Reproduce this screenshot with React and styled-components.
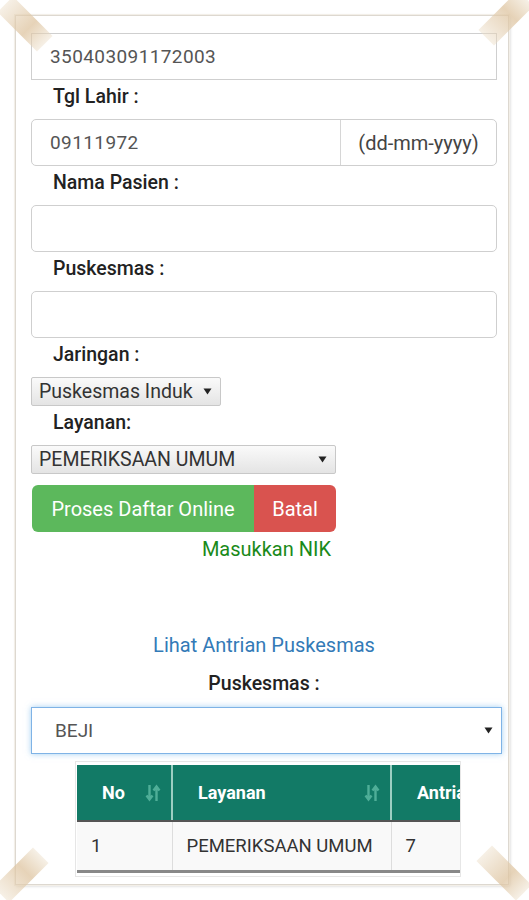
import styled, { createGlobalStyle } from "styled-components";

const GlobalStyle = createGlobalStyle`
  html, body {
    margin: 0;
    padding: 0;
    background: #ffffff;
    font-family: Roboto, "Liberation Sans", sans-serif;
  }
  * { box-sizing: border-box; }
`;

function SortIcon() {
  return (
    <svg width="16" height="20" viewBox="0 0 16 20" fill="none">
      <path d="M4.5 2v14M1.5 12.5l3 4 3-4" stroke="#4fae98" strokeWidth="2.4" />
      <path d="M11.5 18V4M8.5 7.5l3-4 3 4" stroke="#4fae98" strokeWidth="2.4" />
    </svg>
  );
}

function Caret() {
  return (
    <svg width="9" height="7" viewBox="0 0 9 7">
      <path d="M0.5 0.5h8L4.5 6.5z" fill="#222" />
    </svg>
  );
}

export default function App() {
  return (
    <Page>
      <GlobalStyle />
      <Card>
        <TextInput>350403091172003</TextInput>
        <Label>Tgl Lahir :</Label>
        <InputGroup>
          <GroupField>09111972</GroupField>
          <Addon>(dd-mm-yyyy)</Addon>
        </InputGroup>
        <Label>Nama Pasien :</Label>
        <TextInput $rounded />
        <Label>Puskesmas :</Label>
        <TextInput $rounded />
        <Label>Jaringan :</Label>
        <NativeSelect $width={190}>
          <span>Puskesmas Induk</span>
          <Caret />
        </NativeSelect>
        <Label>Layanan:</Label>
        <NativeSelect $width={305}>
          <span>PEMERIKSAAN UMUM</span>
          <Caret />
        </NativeSelect>
        <ButtonRow>
          <Button $color="#5cb85c" $radius="6px 0 0 6px" $width={222}>
            Proses Daftar Online
          </Button>
          <Button $color="#d9534f" $radius="0 6px 6px 0" $width={82}>
            Batal
          </Button>
        </ButtonRow>
        <Notice>Masukkan NIK</Notice>
        <QueueLink>Lihat Antrian Puskesmas</QueueLink>
        <CenterLabel>Puskesmas :</CenterLabel>
        <FocusSelect>
          <span>BEJI</span>
          <Caret />
        </FocusSelect>
        <TableWrap>
          <Table>
            <thead>
              <tr>
                <Th $width={95}>
                  <HeadInner>
                    <span>No</span>
                    <SortIcon />
                  </HeadInner>
                </Th>
                <Th $width={219}>
                  <HeadInner>
                    <span>Layanan</span>
                    <SortIcon />
                  </HeadInner>
                </Th>
                <Th $width={120}>
                  <HeadInner>
                    <span>Antrian</span>
                  </HeadInner>
                </Th>
              </tr>
            </thead>
            <tbody>
              <tr>
                <Td>1</Td>
                <Td>PEMERIKSAAN UMUM</Td>
                <Td>7</Td>
              </tr>
            </tbody>
          </Table>
        </TableWrap>
      </Card>
      <Tape $x={25} $y={24} $rot={45} />
      <Tape $x={506} $y={18} $rot={-45} />
      <Tape $x={21} $y={875} $rot={-45} />
      <Tape $x={504} $y={873} $rot={45} />
    </Page>
  );
}

const Page = styled.div`
  position: relative;
  width: 529px;
  height: 900px;
  padding: 15px 20px 15px 15px;
  overflow: hidden;
`;

const Card = styled.div`
  height: 870px;
  border: 1px solid #ddd8d0;
  box-shadow: 0 0 0 1px #f3efe8, 1px 1px 3px rgba(0, 0, 0, 0.2);
  background: #ffffff;
  padding: 17px 0 0 15px;
  overflow: hidden;
  display: flex;
  flex-direction: column;
  align-items: flex-start;
`;

const TextInput = styled.div`
  width: 466px;
  height: 47px;
  border: 1px solid #cfcfcf;
  border-radius: ${(p) => (p.$rounded ? "5px" : "0")};
  padding: 0 18px;
  display: flex;
  align-items: center;
  font-size: 19px;
  letter-spacing: 0.4px;
  color: #555;
`;

const Label = styled.div`
  height: 39px;
  padding: 0 0 6px 22px;
  display: flex;
  align-items: center;
  font-size: 19.5px;
  font-weight: 500;
  color: #222;
`;

const InputGroup = styled.div`
  width: 466px;
  height: 47px;
  border: 1px solid #cfcfcf;
  border-radius: 5px;
  display: flex;
`;

const GroupField = styled.div`
  flex: 1;
  padding: 0 18px;
  display: flex;
  align-items: center;
  font-size: 19px;
  letter-spacing: 0.4px;
  color: #555;
`;

const Addon = styled.div`
  width: 156px;
  border-left: 1px solid #d6d6d6;
  display: flex;
  align-items: center;
  justify-content: center;
  font-size: 20px;
  color: #444;
`;

const NativeSelect = styled.div`
  width: ${(p) => p.$width}px;
  height: 29px;
  border: 1px solid #c8c8c8;
  border-radius: 2px;
  background: linear-gradient(#fafafa, #e4e4e4);
  padding: 0 8px 0 7px;
  display: flex;
  align-items: center;
  justify-content: space-between;
  font-size: 19.5px;
  color: #333;
`;

const ButtonRow = styled.div`
  display: flex;
  margin-top: 11px;
  padding-left: 1px;
`;

const Button = styled.div`
  width: ${(p) => p.$width}px;
  height: 47px;
  background: ${(p) => p.$color};
  border-radius: ${(p) => p.$radius};
  color: #ffffff;
  font-size: 20px;
  display: flex;
  align-items: center;
  justify-content: center;
`;

const Notice = styled.div`
  width: 300px;
  text-align: right;
  margin-top: 5px;
  font-size: 20px;
  color: #1a8a1a;
  line-height: 24px;
`;

const QueueLink = styled.div`
  width: 466px;
  text-align: center;
  margin-top: 72px;
  font-size: 20px;
  color: #337ab7;
  line-height: 24px;
`;

const CenterLabel = styled.div`
  width: 466px;
  text-align: center;
  margin-top: 15px;
  font-size: 19.5px;
  font-weight: 500;
  color: #222;
  line-height: 24px;
`;

const FocusSelect = styled.div`
  width: 471px;
  height: 47px;
  margin-top: 11px;
  border: 1px solid #7fb3e6;
  box-shadow: 0 0 6px rgba(102, 175, 233, 0.6);
  padding: 0 8px 0 23px;
  display: flex;
  align-items: center;
  justify-content: space-between;
  font-size: 19px;
  color: #555;
`;

const TableWrap = styled.div`
  width: 386px;
  margin: 7px 0 0 44px;
  border: 1px solid #e6e6e6;
  padding: 3px 2px 3px 1px;
  overflow: hidden;
`;

const Table = styled.table`
  border-collapse: collapse;
  table-layout: fixed;
  width: 434px;
`;

const Th = styled.th`
  width: ${(p) => p.$width}px;
  height: 56px;
  background: #127a66;
  color: #ffffff;
  font-size: 18px;
  font-weight: 700;
  text-align: left;
  border-right: 2px solid #9ccfc2;
  border-bottom: 2px solid #555;
  padding: 0 10px 0 25px;
`;

const HeadInner = styled.div`
  display: flex;
  align-items: center;
  justify-content: space-between;
`;

const Td = styled.td`
  height: 50px;
  background: #f9f9f9;
  font-size: 18.5px;
  color: #333;
  border-right: 1px solid #dddddd;
  border-bottom: 3px solid #888;
  padding: 0 14px;
`;

const Tape = styled.div`
  position: absolute;
  left: ${(p) => p.$x - 28}px;
  top: ${(p) => p.$y - 11}px;
  width: 56px;
  height: 22px;
  transform: rotate(${(p) => p.$rot}deg);
  background: linear-gradient(
    90deg,
    rgba(236, 222, 200, 0.45),
    rgba(222, 196, 160, 0.75) 60%,
    rgba(236, 222, 200, 0.45)
  );
`;
